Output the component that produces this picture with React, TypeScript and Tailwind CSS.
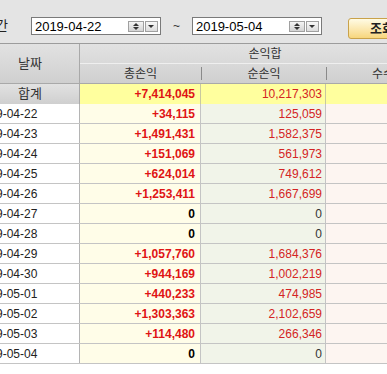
import React from 'react';

const rows = [
  { d: '2019-04-22', t: '+34,115', n: '125,059' },
  { d: '2019-04-23', t: '+1,491,431', n: '1,582,375' },
  { d: '2019-04-24', t: '+151,069', n: '561,973' },
  { d: '2019-04-25', t: '+624,014', n: '749,612' },
  { d: '2019-04-26', t: '+1,253,411', n: '1,667,699' },
  { d: '2019-04-27', t: '0', n: '0' },
  { d: '2019-04-28', t: '0', n: '0' },
  { d: '2019-04-29', t: '+1,057,760', n: '1,684,376' },
  { d: '2019-04-30', t: '+944,169', n: '1,002,219' },
  { d: '2019-05-01', t: '+440,233', n: '474,985' },
  { d: '2019-05-02', t: '+1,303,363', n: '2,102,659' },
  { d: '2019-05-03', t: '+114,480', n: '266,346' },
  { d: '2019-05-04', t: '0', n: '0' },
];

const DateBox: React.FC<{ value: string }> = ({ value }) => (
  <div className="w-[130px] h-[18px] border border-[#7a7a7a] bg-white flex items-center pl-[3px] pr-[2px]">
    <span className="flex-1 text-[13px] leading-none text-black">{value}</span>
    <div className="w-[16px] h-[11px] border border-[#a0a0a0] bg-linear-to-b from-[#f4f4f4] to-[#d4d4d4] flex flex-col items-center justify-center gap-[1px]">
      <div className="w-0 h-0 border-x-[3px] border-x-transparent border-b-[3px] border-b-[#333]" />
      <div className="w-0 h-0 border-x-[3px] border-x-transparent border-t-[3px] border-t-[#333]" />
    </div>
    <div className="w-[13px] h-[11px] ml-[1px] border border-[#a0a0a0] bg-linear-to-b from-[#f8f8f8] to-[#dcdcdc] flex items-center justify-center">
      <div className="w-0 h-0 border-x-[3px] border-x-transparent border-t-[3px] border-t-[#333]" />
    </div>
  </div>
);

const cols = 'grid grid-cols-[99px_121px_125px_124px]';

export default function App() {
  return (
    <div className="w-[387px] h-[374px] overflow-hidden bg-white font-['Liberation_Sans','Noto_Sans_CJK_KR',sans-serif]">
      {/* search bar */}
      <div className="h-[44px] bg-[#e4e4e4] border-b border-[#9c9c9c] flex items-start pt-[17px] whitespace-nowrap">
        <span className="ml-[-16px] w-[26px] mt-[1px] text-[13px] text-[#222] leading-[16px]">기간</span>
        <div className="ml-[23px]">
          <DateBox value="2019-04-22" />
        </div>
        <span className="ml-[12px] mt-[1px] text-[12px] text-[#333] leading-[16px]">~</span>
        <div className="ml-[12px]">
          <DateBox value="2019-05-04" />
        </div>
        <button className="ml-[26px] mt-[1px] shrink-0 w-[70px] h-[21px] rounded-[3px] border border-[#c9a24a] bg-linear-to-b from-[#fffbe4] to-[#f7d67c] text-left pl-[21px] text-[13px] font-bold text-[#222] leading-none">
          조회
        </button>
      </div>

      <div className="ml-[-19px] text-[12px]">
        {/* header */}
        <div className={`${cols} grid-rows-[20px_20px] bg-linear-to-b from-[#e2e2e2] to-[#cfcfcf] text-[#333]`}>
          <div className="row-span-2 flex items-center justify-center border-b border-r border-[#a9a9a9] text-[13px]">날짜</div>
          <div className="col-span-3 flex items-center justify-center border-b border-[#efefef]">손익합</div>
          <div className="col-span-3 flex items-center border-b border-[#a9a9a9]">
            <span className="w-[121px] text-center">총손익</span>
            <div className="w-px h-[13px] bg-[#8a8a8a]" />
            <span className="w-[124px] text-center">순손익</span>
            <div className="w-px h-[13px] bg-[#8a8a8a]" />
            <span className="w-[123px] text-center">수수료</span>
          </div>
        </div>

        {/* summary row */}
        <div className={`${cols} h-[20px] border-b border-[#9a9a9a]`}>
          <div className="flex items-center justify-center bg-linear-to-b from-[#e2e2e2] to-[#cfcfcf] border-r border-[#a9a9a9] text-[13px] text-[#333]">합계</div>
          <div className="flex items-center justify-end pr-[5px] bg-[#ffff9e] border-r border-[#c8c8a0] font-bold text-[#e01414]">+7,414,045</div>
          <div className="flex items-center justify-end pr-[3px] bg-[#ffff9e] border-r border-[#c8c8a0] text-[#d42424]">10,217,303</div>
          <div className="bg-[#ffff9e]" />
        </div>

        {/* data rows */}
        {rows.map((r) => {
          const zero = r.t === '0';
          return (
            <div key={r.d} className={`${cols} h-[20px] border-b border-[#c4c4c4]`}>
              <div className="flex items-center bg-white border-r border-[#b4b4b4] text-[#222]">
                <span className="-ml-[5px]">{r.d}</span>
              </div>
              <div className={`flex items-center justify-end pr-[5px] bg-[#fffde8] border-r border-[#c4c4c4] font-bold ${zero ? 'text-black' : 'text-[#e01414]'}`}>{r.t}</div>
              <div className={`flex items-center justify-end pr-[3px] bg-[#f1f4e9] border-r border-[#c4c4c4] ${zero ? 'text-[#333]' : 'text-[#d42424]'}`}>{r.n}</div>
              <div className="bg-[#fdf5f1]" />
            </div>
          );
        })}
      </div>
    </div>
  );
}
